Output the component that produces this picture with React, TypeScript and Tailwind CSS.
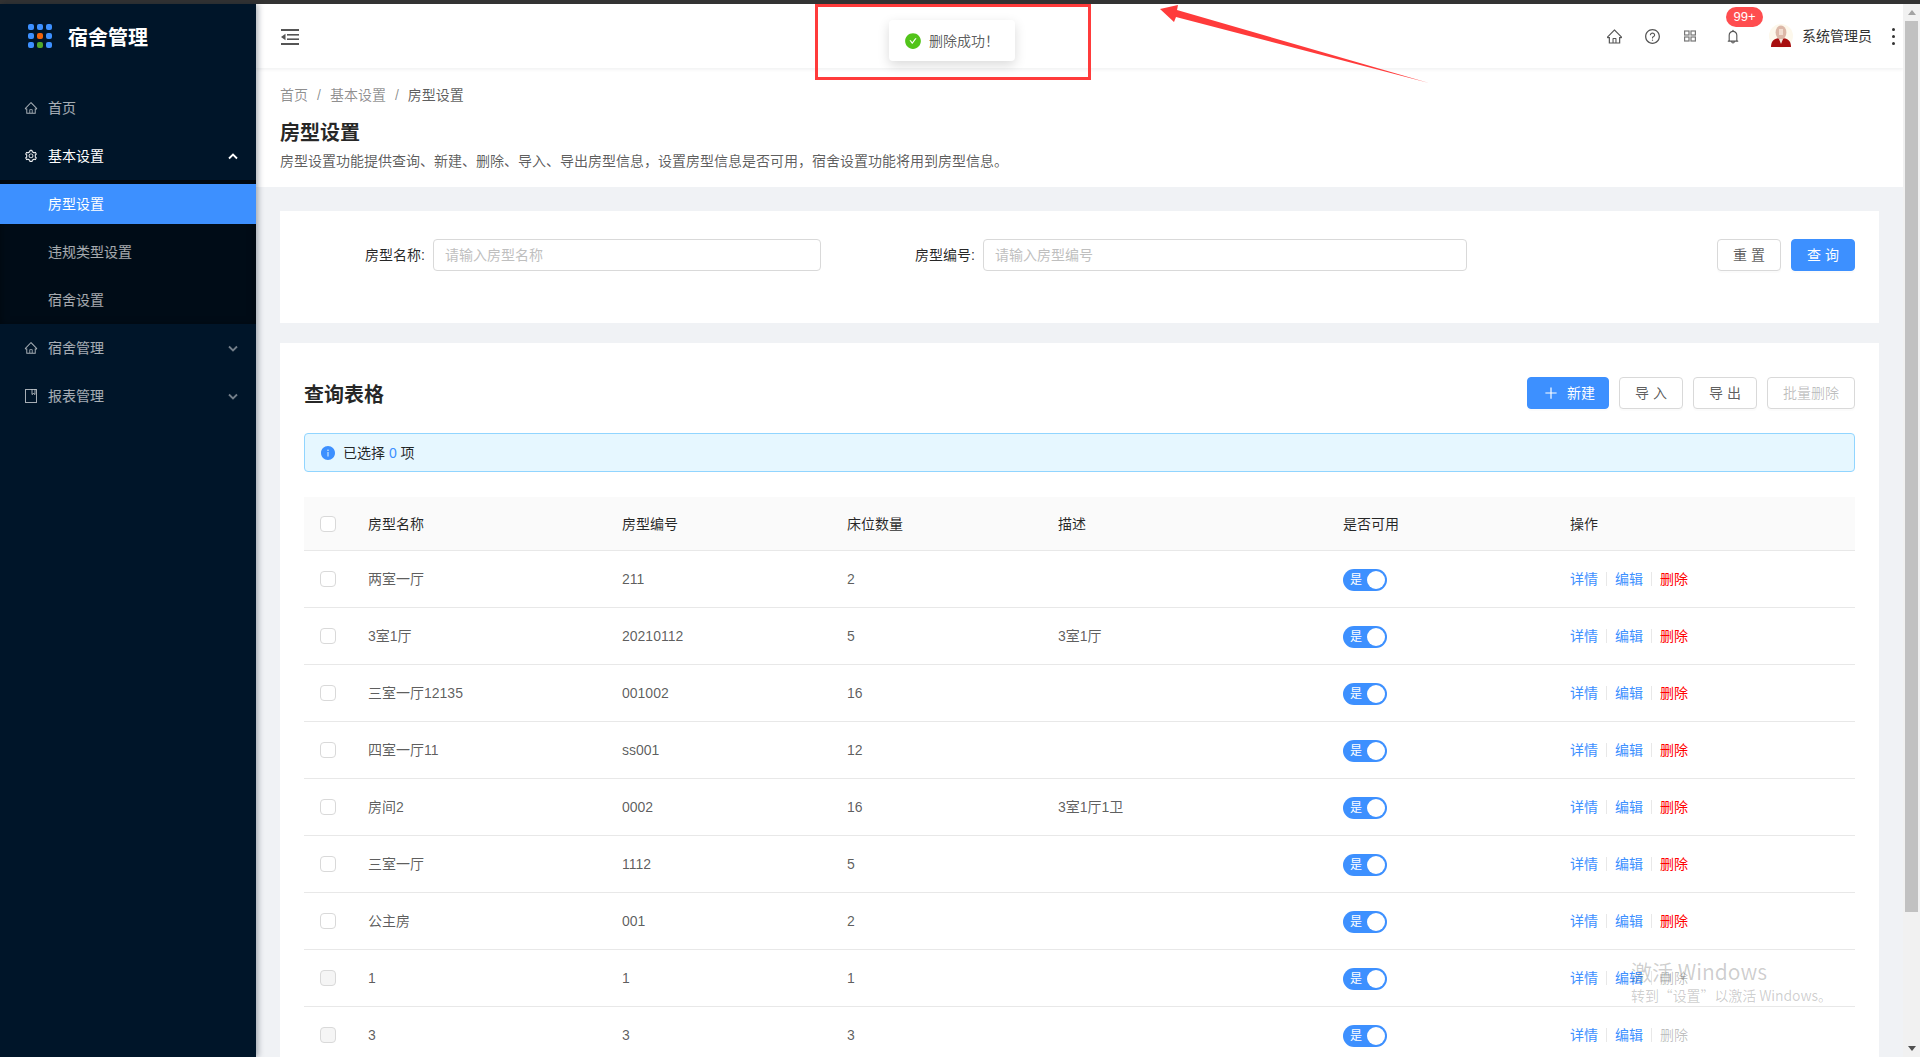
import {
  AiFillCheckCircle,
  AiFillInfoCircle,
  AiOutlineBell,
  AiOutlineHome,
  AiOutlinePlus,
  AiOutlineQuestionCircle,
  AiOutlineSetting,
} from "react-icons/ai";

const rows = [
  { name: "两室一厅", code: "211", beds: "2", desc: "" },
  { name: "3室1厅", code: "20210112", beds: "5", desc: "3室1厅" },
  { name: "三室一厅12135", code: "001002", beds: "16", desc: "" },
  { name: "四室一厅11", code: "ss001", beds: "12", desc: "" },
  { name: "房间2", code: "0002", beds: "16", desc: "3室1厅1卫" },
  { name: "三室一厅", code: "1112", beds: "5", desc: "" },
  { name: "公主房", code: "001", beds: "2", desc: "" },
  { name: "1", code: "1", beds: "1", desc: "", locked: true },
  { name: "3", code: "3", beds: "3", desc: "", locked: true },
];

function Chevron({ up, bright }: { up?: boolean; bright?: boolean }) {
  return (
    <svg width="10" height="7" viewBox="0 0 10 7" className={bright ? "text-white" : "text-white/45"}>
      <path d={up ? "M1 5.5 5 1.5 9 5.5" : "M1 1.5 5 5.5 9 1.5"} fill="none" stroke="currentColor" strokeWidth="1.8" />
    </svg>
  );
}

function BookIcon() {
  return (
    <svg width="14" height="14" viewBox="0 0 14 14" fill="none" stroke="currentColor" strokeWidth="1">
      <rect x="1.5" y="0.5" width="11" height="13" />
      <path d="M8 .5v5l1.5-1 1.5 1v-5" />
    </svg>
  );
}

function NavItem({ icon, label, chevron, bright }: { icon: React.ReactNode; label: string; chevron?: "up" | "down"; bright?: boolean }) {
  return (
    <div className={`flex h-10 items-center pl-6 pr-[18px] my-1 text-sm ${bright ? "text-white" : "text-white/65"}`}>
      <span className="mr-[10px] flex w-[14px] justify-center text-[16px]">{icon}</span>
      <span className="flex-1">{label}</span>
      {chevron && <Chevron up={chevron === "up"} bright={bright} />}
    </div>
  );
}

function Sidebar() {
  const dots = ["#3d90ff", "#3d90ff", "#3d90ff", "#3d90ff", "#f2630a", "#3d90ff", "#3d90ff", "#52a82a", "#3d90ff"];
  return (
    <aside className="z-10 w-64 shrink-0 bg-[#001529] shadow-[2px_0_6px_rgba(0,21,41,0.35)]">
      <div className="flex h-[64px] items-center pl-7">
        <div className="grid w-6 grid-cols-3 gap-[3px]">
          {dots.map((c, i) => (
            <span key={i} className="h-[6px] w-[6px] rounded-[2px]" style={{ background: c }} />
          ))}
        </div>
        <span className="ml-4 pt-1 text-xl font-bold text-white">宿舍管理</span>
      </div>
      <nav className="mt-5">
        <NavItem icon={<AiOutlineHome />} label="首页" />
        <div className="mt-2" />
        <NavItem icon={<AiOutlineSetting />} label="基本设置" chevron="up" bright />
        <div className="bg-[#000c17] py-1 shadow-[inset_0_2px_8px_rgba(0,0,0,0.45)] text-sm text-white/65">
          <div className="flex h-10 items-center bg-[#3d90ff] pl-12 text-white">房型设置</div>
          <div className="mt-2 flex h-10 items-center pl-12">违规类型设置</div>
          <div className="mt-2 flex h-10 items-center pl-12">宿舍设置</div>
        </div>
        <div className="mt-1" />
        <NavItem icon={<AiOutlineHome />} label="宿舍管理" chevron="down" />
        <div className="mt-2" />
        <NavItem icon={<BookIcon />} label="报表管理" chevron="down" />
      </nav>
    </aside>
  );
}

function Header() {
  return (
    <header className="z-[1] flex h-16 shrink-0 items-center bg-white pl-[25px] pr-2 shadow-[0_1px_4px_rgba(0,21,41,0.08)]">
      <svg width="18" height="16" viewBox="0 0 18 16" fill="#555" className="mt-[2px]">
        <rect width="18" height="2" />
        <rect y="14" width="18" height="2" />
        <rect x="6" y="5" width="12" height="1.6" />
        <rect x="6" y="9.4" width="12" height="1.6" />
        <path d="M4.5 4.8v6.4L0 8z" />
      </svg>
      <div className="flex-1" />
      <AiOutlineHome className="text-[17px] text-[#555]" />
      <AiOutlineQuestionCircle className="ml-[21px] text-[17px] text-[#555]" />
      <svg width="12" height="12" viewBox="0 0 12 12" className="ml-[23px]" fill="none" stroke="#777" strokeWidth="1.2">
        <rect x="0.6" y="1" width="4.4" height="4" />
        <rect x="7" y="1" width="4.4" height="4" />
        <rect x="0.6" y="7" width="4.4" height="4" />
        <rect x="7" y="7" width="4.4" height="4" />
      </svg>
      <div className="relative ml-[29px] flex w-4 justify-center">
        <AiOutlineBell className="text-[17px] text-[#555]" />
        <span className="absolute -top-[21px] left-[1px] flex h-5 w-[37px] items-center justify-center rounded-full bg-[#ff4d4f] text-[13px] text-white">
          99+
        </span>
      </div>
      <svg width="24" height="24" viewBox="0 0 24 24" className="ml-[28px]">
        <circle cx="12" cy="12" r="12" fill="#fdf8ec" />
        <path d="M2 23c0-6 3-9 10-9s10 3 10 9z" fill="#a80f0f" />
        <ellipse cx="12" cy="8.5" rx="5.4" ry="7" fill="#dcb8a8" />
        <path d="M10 15h4l-2 5z" fill="#f4e6dc" />
        <rect x="10" y="5" width="4" height="6" fill="#f2ddd0" />
      </svg>
      <span className="ml-[9px] text-sm text-[#333]">系统管理员</span>
      <div className="ml-5 flex flex-col gap-1">
        <span className="h-[3px] w-[3px] rounded-full bg-[#333]" />
        <span className="h-[3px] w-[3px] rounded-full bg-[#333]" />
        <span className="h-[3px] w-[3px] rounded-full bg-[#333]" />
      </div>
    </header>
  );
}

function Btn({ children, primary, disabled, className = "" }: { children: React.ReactNode; primary?: boolean; disabled?: boolean; className?: string }) {
  const tone = primary
    ? "bg-[#3d90ff] border-[#3d90ff] text-white"
    : disabled
    ? "border-[#d9d9d9] text-black/25 bg-white"
    : "border-[#d9d9d9] text-black/65 bg-white";
  return (
    <button className={`flex h-8 items-center justify-center rounded border text-sm shadow-[0_2px_0_rgba(0,0,0,0.015)] ${tone} ${className}`}>
      {children}
    </button>
  );
}

function SearchField({ label, placeholder, width, labelWidth }: { label: string; placeholder: string; width: string; labelWidth: string }) {
  return (
    <div className="flex items-center">
      <label className={`${labelWidth} text-right text-sm text-black/85`}>{label}:</label>
      <div className={`ml-2 flex h-8 items-center rounded border border-[#d9d9d9] pl-[11px] text-sm text-[#bfbfbf] ${width}`}>{placeholder}</div>
    </div>
  );
}

function Check({ locked }: { locked?: boolean }) {
  return <span className={`block h-4 w-4 rounded-sm border border-[#d9d9d9] ${locked ? "bg-[#f5f5f5]" : "bg-white"}`} />;
}

function Toggle() {
  return (
    <span className="flex h-[22px] w-11 items-center justify-between rounded-full bg-[#3d90ff] pl-[7px] pr-[2px] text-xs text-white">
      是
      <span className="h-[18px] w-[18px] rounded-full bg-white" />
    </span>
  );
}

function Sep() {
  return <span className="mx-2 h-[14px] w-px bg-[#e8e8e8]" />;
}

function TableCard() {
  return (
    <section className="mt-5 bg-white px-6 pt-[34px]">
      <div className="flex h-8 items-start">
        <h2 className="flex-1 pt-[2px] text-xl leading-8 font-semibold text-black/85">查询表格</h2>
        <Btn primary className="w-[82px]">
          <AiOutlinePlus className="mr-2 ml-[2px] text-[16px]" />
          新建
        </Btn>
        <Btn className="ml-[10px] w-16">导 入</Btn>
        <Btn className="ml-[10px] w-16">导 出</Btn>
        <Btn disabled className="ml-[10px] w-[88px]">批量删除</Btn>
      </div>
      <div className="mt-6 flex h-[39px] items-center rounded border border-[#91d5ff] bg-[#e6f7ff] pl-[15px] text-sm text-black/85">
        <AiFillInfoCircle className="mr-[7px] text-[16px] text-[#3d90ff]" />
        已选择&nbsp;<span className="text-[#3d90ff]">0</span>&nbsp;项
      </div>
      <table className="mt-[25px] w-full table-fixed text-left text-sm">
        <thead>
          <tr className="h-[53px] border-b border-[#e8e8e8] bg-[#fafafa] text-black/85">
            <th className="w-16 pt-[2px] pl-4 font-normal"><Check /></th>
            <th className="w-[254px] pt-[2px] font-normal">房型名称</th>
            <th className="w-[225px] pt-[2px] font-normal">房型编号</th>
            <th className="w-[211px] pt-[2px] font-normal">床位数量</th>
            <th className="w-[285px] pt-[2px] font-normal">描述</th>
            <th className="w-[227px] pt-[2px] font-normal">是否可用</th>
            <th className="pt-[2px] font-normal">操作</th>
          </tr>
        </thead>
        <tbody className="text-black/65">
          {rows.map((r) => (
            <tr key={r.name} className="h-[57px] border-b border-[#e8e8e8]">
              <td className="pl-4"><Check locked={r.locked} /></td>
              <td>{r.name}</td>
              <td>{r.code}</td>
              <td>{r.beds}</td>
              <td>{r.desc}</td>
              <td className="pt-[2px]"><Toggle /></td>
              <td>
                <div className="flex items-center">
                  <a className="text-[#3d90ff]">详情</a>
                  <Sep />
                  <a className="text-[#3d90ff]">编辑</a>
                  <Sep />
                  <a className={r.locked ? "text-black/25" : "text-[#ff0000]"}>删除</a>
                </div>
              </td>
            </tr>
          ))}
        </tbody>
      </table>
    </section>
  );
}

function Scrollbar() {
  return (
    <div className="flex w-[17px] shrink-0 flex-col items-center bg-[#f1f1f1]">
      <div className="flex h-[17px] items-center justify-center">
        <span className="border-x-[4px] border-b-[5px] border-x-transparent border-b-[#a3a3a3]" />
      </div>
      <div className="h-[891px] w-[13px] bg-[#c1c1c1]" />
      <div className="flex-1" />
      <div className="flex h-[17px] items-center justify-center">
        <span className="border-x-[4px] border-t-[5px] border-x-transparent border-t-[#505050]" />
      </div>
    </div>
  );
}

export default function App() {
  return (
    <div className="relative flex h-[1057px] w-[1920px] flex-col overflow-hidden bg-[#f0f2f5] [font-family:'Liberation_Sans','Noto_Sans_CJK_SC',sans-serif]">
      <div className="h-1 shrink-0 bg-[#333333]" />
      <div className="flex min-h-0 flex-1">
        <Sidebar />
        <main className="flex min-w-0 flex-1 flex-col overflow-hidden">
          <Header />
          <div className="h-[119px] shrink-0 bg-white pl-6 pt-[17px]">
            <div className="flex h-5 items-center text-sm text-black/45">
              首页<span className="mx-[9px]">/</span>基本设置<span className="mx-[9px]">/</span>
              <span className="text-black/65">房型设置</span>
            </div>
            <h1 className="mt-[14px] text-xl leading-7 font-semibold text-black/85">房型设置</h1>
            <p className="mt-[3px] text-sm leading-[22px] text-black/65">
              房型设置功能提供查询、新建、删除、导入、导出房型信息，设置房型信息是否可用，宿舍设置功能将用到房型信息。
            </p>
          </div>
          <div className="mx-6 mt-6">
            <section className="flex h-28 items-start bg-white pt-7 pr-6">
              <SearchField label="房型名称" placeholder="请输入房型名称" labelWidth="w-[145px]" width="w-[388px]" />
              <SearchField label="房型编号" placeholder="请输入房型编号" labelWidth="w-[154px]" width="w-[484px]" />
              <div className="flex-1" />
              <Btn className="w-16">重 置</Btn>
              <Btn primary className="ml-[10px] w-16">查 询</Btn>
            </section>
            <TableCard />
          </div>
        </main>
        <Scrollbar />
      </div>

      {/* annotation and overlays */}
      <div className="absolute top-5 left-[889px] z-20 flex h-[41px] w-[126px] items-center rounded bg-white pl-[15px] text-sm text-black/65 shadow-[0_4px_12px_rgba(0,0,0,0.15)]">
        <AiFillCheckCircle className="mr-[7px] text-[18px] text-[#52c41a]" />
        删除成功！
      </div>
      <div className="absolute top-1 left-[815px] z-30 h-[76px] w-[276px] border-[3px] border-[#ff3b3b]" />
      <svg className="pointer-events-none absolute top-0 left-0 z-30" width="1920" height="100" viewBox="0 0 1920 100">
        <polygon points="1160,9 1178,5 1177,10 1429,83 1176,17 1174,22" fill="#ff3b3b" />
      </svg>
      <div className="pointer-events-none absolute top-[957px] left-[1631px] z-30 text-black/20 [font-family:'Noto_Sans_CJK_SC',sans-serif]">
        <div className="text-[21px] leading-7">激活 Windows</div>
        <div className="text-sm leading-5 tracking-[-0.1px]">转到“设置”以激活 Windows。</div>
      </div>
    </div>
  );
}
